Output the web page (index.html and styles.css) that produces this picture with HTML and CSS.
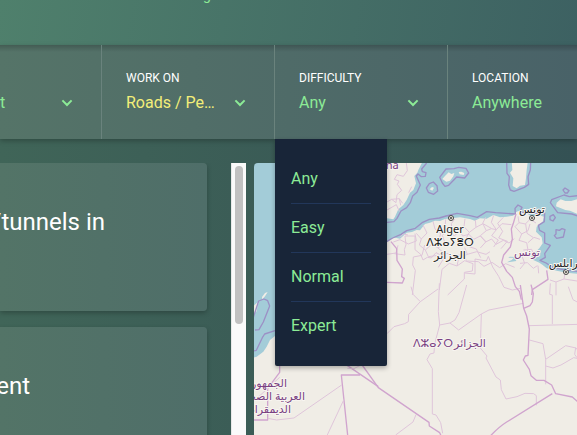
FILE: index.html
```html
<!DOCTYPE html>
<html lang="en">
<head>
<meta charset="utf-8">
<title>Challenges</title>
<link rel="stylesheet" href="styles.css">
</head>
<body>
<header class="header"><p class="header-note">g</p></header>

<nav class="filters">
  <div class="filter filter-first">
    <button class="filter-button" type="button">
      <span class="filter-value"><span>t</span><svg class="chevron" viewBox="0 0 12 8"><path d="M1.4 1.4 6 6l4.600-4.600"/></svg></span>
    </button>
  </div>
  <div class="filter">
    <button class="filter-button" type="button">
      <span class="filter-label">WORK ON</span>
      <span class="filter-value selected"><span>Roads / Pe…</span><svg class="chevron" viewBox="0 0 12 8"><path d="M1.400 1.400 6 6l4.600-4.600"/></svg></span>
    </button>
  </div>
  <div class="filter">
    <button class="filter-button" type="button" aria-expanded="true">
      <span class="filter-label">DIFFICULTY</span>
      <span class="filter-value"><span>Any</span><svg class="chevron" viewBox="0 0 12 8"><path d="M1.400 1.400 6 6l4.600-4.600"/></svg></span>
    </button>
    <ul class="menu">
      <li><button type="button">Any</button></li>
      <li><button type="button">Easy</button></li>
      <li><button type="button">Normal</button></li>
      <li><button type="button">Expert</button></li>
    </ul>
  </div>
  <div class="filter">
    <button class="filter-button" type="button">
      <span class="filter-label">LOCATION</span>
      <span class="filter-value"><span>Anywhere</span></span>
    </button>
  </div>
</nav>

<main class="content">
  <section class="cards">
    <article class="card"><h2 class="card-title">/tunnels in</h2></article>
    <article class="card"><h2 class="card-title card-title-short">ent</h2></article>
  </section>
  <div class="track"><div class="thumb"></div></div>
  <section class="map">
    <svg viewBox="254 163 323 272" preserveAspectRatio="xMinYMin slice">
      <rect class="sea" x="254" y="163" width="323" height="272"/>
      <g transform="translate(380 150) scale(.333333)">
        <g class="land">
          <path d="M-10 30H130L120 50 115 60 112 68 103 78 108 100 100 120 90 128 80 150 70 165 55 178 45 200 40 208 21 205-10 208Z"/>
          <path d="M21 277 40 262 60 266 80 248 96 246 110 240 120 241 135 222 150 218 165 212 180 213 195 207 240 202 270 207 284 212 300 205 320 206 340 195 360 202 380 200 400 197 404 188 415 183 440 190 455 200 475 195 492 200 488 216 470 230 468 245 485 262 488 280 478 295 462 310 454 320 460 330 478 338 488 345 500 355 530 362 560 368 600 372V900H-400V628L-370 620-350 605-340 590-330 570-315 558-250 520-100 400Z"/>
          <path d="M395 30 397 60 390 68 400 85 398 108 410 115 420 107 435 105 438 85 440 60 444 30Z"/>
          <path d="m187 87 8-9 11-11 8 5 9-3-3 10-10 13-11 3Z M236 66l8-1 9 4-2 6-12-2Z M149 118l7-7 6 2-5 9Z M530 158l12-10 14 5 18 0 26-8V195l-30-13-14-2-28-11Z"/>
          <path d="m-362 454-5 12-3 18-13 12v-25l10-9Zm25-28-8 3-9 12 1 7 8-9Z"/>
        </g>
        <g class="maritime">
          <path d="M140 39 125 57 127 65 138 68 136 79 124 80 114 72 109 78 121 105 111 127 98 138 91 158 80 173 63 183 51 205 42 215 15 218"/>
          <path d="M15 278 38 264 63 253 80 242 106 235 128 217 148 208 178 204 198 198 231 190 270 197 292 202 320 185 347 188 379 190 406 192 405 175 414 165 426 172 420 184 438 190 494 189 493 215 475 226 479 241 494 249 494 279 511 286 494 311 496 322 480 331 498 339 520 353 550 359 600 365"/>
          <path d="M380 36 381 70 388 80 386 105 391 120 402 124 433 112 446 103 444 80 451 60 452 36"/>
          <path d="m179 82 19-25 24-1 14-4 22 3 8 14-12 15-24-3-24 25-11 3-8-10Z M148 101l12-5 11 11 2 16-12 10-16-6-6-13Z M600 136l-32 4-16-5-37 14-4 9 22 30 43 4 26 9 M549 120l6-6 12 8-5 7-7 0Z M510 199l10-5 6 9-7 10-9-4Z M528 239l10 2 8-5 9 3-5 22-20 4-7-8 5-5Z"/>
          <path d="m-375 540 12-1 13-23 19-48-6-16-11-5-16 6-18 55 M-400 608l29-7 18-38 7-11 31-10"/>
        </g>
        <g class="border-thin">
          <path d="m21 156 14-8 13 10 3-24 14-13-13-18 5-10-14-5 8-14 19 5 12-17-3-23 M35 148l23-2 10 14 M21 180l28-16 9 20 M58 146l4 20 M86 128l9-18"/>
          <path d="m40 276 20-7 25 13 24-9-4-22 M60 262l10-10 14 3 M75 315l-2-16 5-15-3-26 30 0 0 41 17 14 7 17 13-8 12 2 14-16 14 7 22-5 8 12 31-8 19 19 33 2 17 14 24-12 23 16 18-12 27 11"/>
          <path d="M109 250l15 17-6 18 18 15 20-18 18 12 21-15-8-23 12-12 24 13 17-13 8 14 19-5 14 15 20-10 16 18 18-9 13 16 22-12 17 8 16-13"/>
          <path d="m129 225 12 24-17 18 M159 214l6 23 17 14-8 29 M197 208l-2 28-13 15 M224 207l-10 14 3 23 M255 206l-3 24 16 17-12 22 8 20 25 8 13 26 M286 210l2 22-20 15 M317 202l-9 18 11 22-18 15 17 18-17 19 M341 196l-7 21 15 22-14 18 20 13-14 21 M370 202l-17 18 15 24-12 20 26 10-19 22 M319 242l15-6 15 3 17-18 28 3 M288 232l21-11 25 14"/>
          <path d="m21 313 27-4 6-23 M75 315l-32-4 M97 435l9-74-8-16 2-24 26-5 8-31 M178 420l8-62 22-18 23 8 23-16 25 9-2 22-24 4 0 20-50 48 M285 372l0-45 34 6 6-14 13 32 18 28 16 33 25 8 25-5 M254 369l31 3 M231 348l5-23 26-12-8-20 M136 300l9 20 29-4 13 16-12 20 M174 294l21 18-7 20 M262 313l28-8 28 8 12-8"/>
          <path d="m414 199 3 19-12 12 20 22-8 19 23 7 4 22-18 18 8 22-14 17 M417 218l19 4 14-14 18 11 M425 252l19-10 6-20 M444 278l18-16 18 6 M430 300l25-2 5 14 M420 340l22-2 18 17 12-8 M476 370l-2-23 M510 390l18 6 0 40 M528 396l24-9 3-17 M552 387l39 6 M437 222l4 28 18 12"/>
        </g>
        <g class="border">
          <path d="m33 275 17 21 1 35 16 26-2 23 8 5-6 14-46-2"/>
          <path d="m408 192-8 28-6 17 3 30-6 24-20 24-6 22 15 27 17 18 9 28 12 14 6 25"/>
          <path d="m455 435 2-16 47-31-4-27"/>
        </g>
        <path class="lake" d="m381 337 28-4-5-11-9 8Zm4-14 25 0 1-2-22-1Z"/>
      </g>
      <g transform="translate(380 290) scale(.333333)">
        <g class="border-thin">
          <path d="m93-10 7 24 21 21 53-38 M121 35 86 73l-1 22-11 6-32 9-21 21-22 11 M178-20l-3 85 4 40-15 57-2 27-12 3-9 17 16 27V372l11 3 14 23 6 32 M260-15 237 68l-12 22-15 9-31 6 M210 99l26 21 31-22 37-26 23-12 103-20 M304 72l-3 102 20 24-3 6 30 57 13 9 3 29 14 28 33-7 24-10 26 1 8 6v29 M108 374l-9 22-52 39 M511-20l-2 33 8 2v87 M447 107l150-4 M565-10l14 39 18 10 M448 150l41 11 8 47v75 M497 208l60-41 31 7 9 11 M591 205l-10-2-38 22-24 9-22-6 M587 173l-3 20 7 10"/>
        </g>
        <g class="border">
          <path d="M-60 216-5 293 147 397l1 11 31 20 4 9"/>
          <path d="M421-15l10 70 9 23 8 39-4 79-8 2-6 12 18 28 5 19 16 14h23l23 14 12 26 50 10 30 26 M453-16l7 27-3 25-7 11-19 8 M517 311 380 396q-24 15-50 43"/>
        </g>
      </g>
      <g transform="translate(225 290) scale(.333333)">
        <g class="border">
          <path d="M164 220v27l-36 48v95H80 M362 223l98 67 M405 255h-56l20 190"/>
        </g>
        <g class="border-thin"><path d="m164 262-78 72 M128 385l27 5 52-6 143-99 M357 328l-54 115 M367 235l20 1 30-16"/></g>
      </g>
      <g class="marker"><circle cx="451" cy="218" r="2.500"/><circle cx="532" cy="218" r="2.500"/><circle cx="566" cy="272" r="2.500"/></g>
      <g class="dot"><circle cx="451" cy="218" r="1"/><circle cx="532" cy="218" r="1"/><circle cx="566" cy="272" r="1"/></g>
      <g class="place">
        <text x="450" y="233">Alger</text>
        <text x="450" y="246">ⴷⵣⴰⵢⴻⵔ</text>
        <text x="450" y="259">الجزائر</text>
        <text x="532" y="213">تونس</text>
        <text x="568" y="267">طرابلس</text>
      </g>
      <g class="place country">
        <text x="380" y="169">España</text>
        <text x="527" y="256">تونس</text>
        <text x="433" y="347">ⴷⵣⴰⵢⵔ</text>
        <text x="470" y="347">الجزائر</text>
      </g>
      <g class="place country rtl">
        <text x="287" y="387">الجمهورية</text>
        <text x="305" y="400">العربية الصحراوية</text>
        <text x="291" y="413">الديمقراطية</text>
      </g>
    </svg>
  </section>
</main>
</body>
</html>
```
FILE: styles.css
```css
* { box-sizing: border-box; }

body {
  margin: 0;
  height: 100vh;
  display: flex;
  flex-direction: column;
  overflow: hidden;
  font-family: Roboto, "Liberation Sans", sans-serif;
  color: #fff;
  background: linear-gradient(to right, #406558, #345154);
}

button {
  border: 0;
  background: none;
  font: inherit;
  color: inherit;
  text-align: left;
  cursor: pointer;
}

.header {
  flex: none;
  height: 45px;
  overflow: hidden;
  background: linear-gradient(100deg, #4f806c, #3d6162);
}

.header-note {
  margin: -15px 0 0 203px;
  font-size: 14px;
  line-height: 20px;
  color: #8ceb96;
}

.filters {
  position: relative;
  z-index: 1;
  flex: none;
  display: grid;
  grid-template-columns: 102px 173px 173px 1fr;
  height: 94px;
  background: linear-gradient(rgba(0, 0, 0, .2), rgba(0, 0, 0, 0) 7px), linear-gradient(to right, #557468, #496268);
  box-shadow: 0 2px 5px rgba(0, 0, 0, .25);
}

.filter {
  position: relative;
  border-right: 1px solid #6a837d;
}

.filter:last-child { border-right: 0; }

.filter-button {
  display: flex;
  flex-direction: column;
  justify-content: flex-end;
  width: 100%;
  height: 100%;
  padding: 24px 28px 24px 24px;
}

.filter-first .filter-button { padding-left: 0; }

.filter-label {
  font-size: 12px;
  line-height: 18px;
  margin-bottom: 4px;
}

.filter-value {
  display: flex;
  align-items: center;
  justify-content: space-between;
  font-size: 16px;
  line-height: 24px;
  white-space: nowrap;
  color: #8ceb96;
}

.selected { color: #f3ee79; }

.chevron {
  width: 12px;
  height: 8px;
  fill: none;
  stroke: #8ceb96;
  stroke-width: 2;
}

.menu {
  position: absolute;
  top: 100%;
  left: 0;
  width: 112px;
  margin: 0;
  padding: 16px;
  list-style: none;
  background: #182538;
  border-radius: 0 0 2px 2px;
  box-shadow: 0 2px 5px rgba(0, 0, 0, .3);
  color: #8ceb96;
}

.menu li + li { border-top: 1px solid #22375a; }

.menu button {
  display: block;
  width: 100%;
  padding: 0;
  font-size: 16px;
  line-height: 48px;
}

.content {
  flex: 1;
  min-height: 0;
  display: flex;
  padding-top: 24px;
  overflow: hidden;
}

.cards {
  flex: 0 0 231px;
  display: flex;
  flex-direction: column;
  gap: 16px;
  padding-right: 24px;
  overflow: hidden;
}

.card {
  flex: none;
  height: 148px;
  padding-top: 43px;
  border-radius: 0 4px 4px 0;
  background: linear-gradient(to right, #537467, #4f6e69);
  box-shadow: 0 2px 5px rgba(0, 0, 0, .25);
}

.card-title {
  display: flex;
  justify-content: flex-end;
  width: 105px;
  margin: 0;
  overflow: hidden;
  font-size: 24px;
  font-weight: 400;
  line-height: 32px;
  white-space: nowrap;
}

.card-title-short { width: 30px; }

.track {
  flex: 0 0 15px;
  margin-right: 8px;
  padding: 3px 3px 0;
  background: #fafafa;
  border-left: 1px solid #e8e8e8;
}

.thumb {
  height: 158px;
  border-radius: 4px;
  background: #c1c1c1;
}

.map {
  flex: 1;
  min-width: 0;
  overflow: hidden;
  border-radius: 4px 0 0 0;
}

.map svg {
  display: block;
  width: 100%;
  height: 100%;
}

.sea, .lake { fill: #a3ccd8; }
.land { fill: #f0ede6; }

.maritime, .border, .border-thin {
  fill: none;
  stroke-linejoin: round;
}

.maritime { stroke: #9c90c5; stroke-width: 4; }
.border { stroke: #d0a4ce; stroke-width: 4; }
.border-thin { stroke: #dfc5da; stroke-width: 3; }

.marker { fill: #eee8dc; stroke: #444; stroke-width: 1; }
.dot { fill: #444; }

.place {
  font-family: "Noto Sans", "DejaVu Sans", sans-serif;
  font-size: 11px;
  text-anchor: middle;
  fill: #222;
  stroke: #f8f5f1;
  stroke-width: 2px;
  stroke-linejoin: round;
  paint-order: stroke;
}

.country { fill: #793f82; }
.rtl { direction: rtl; text-anchor: start; }
```
